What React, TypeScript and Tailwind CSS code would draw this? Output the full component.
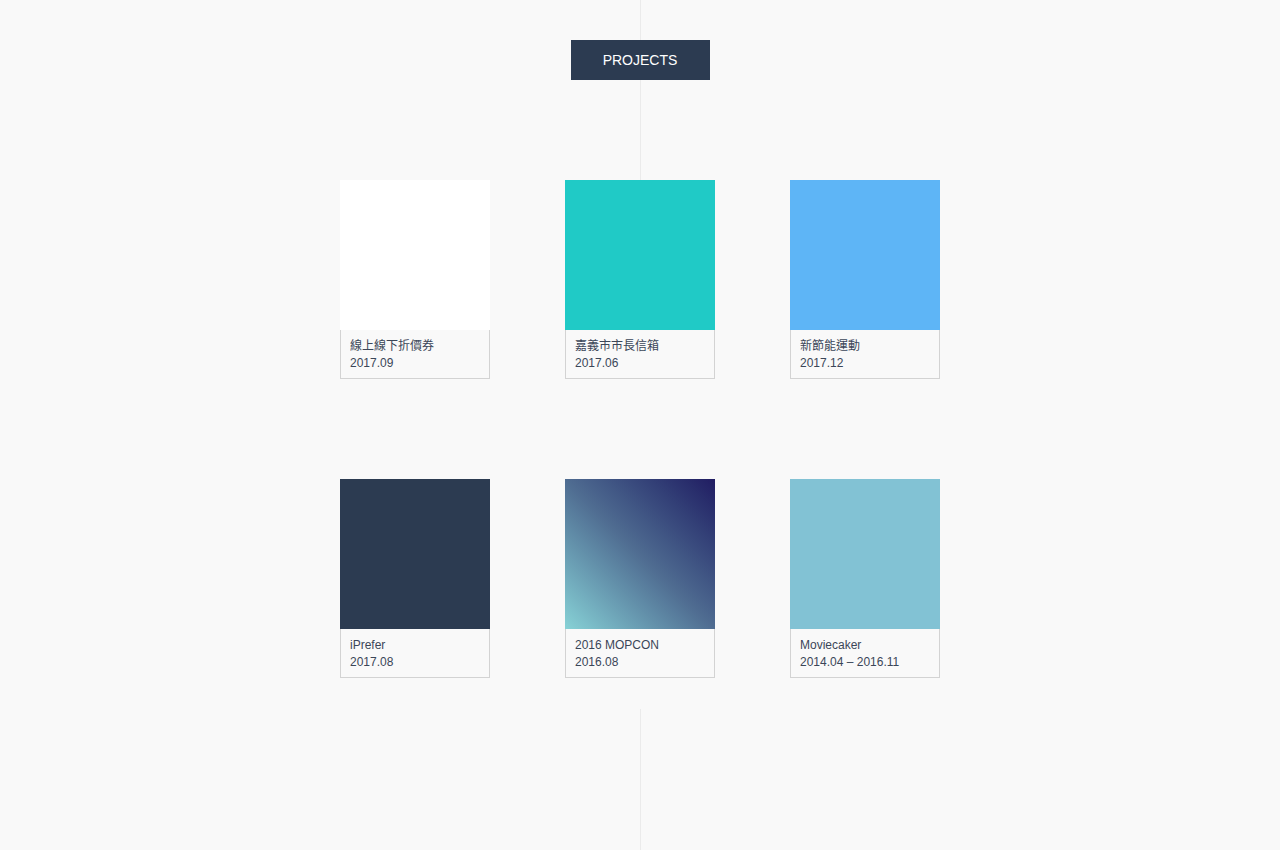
const PROJECTS = [
  { title: "線上線下折價券", date: "2017.09", cover: "bg-white" },
  { title: "嘉義市市長信箱", date: "2017.06", cover: "bg-[#20cac6]" },
  { title: "新節能運動", date: "2017.12", cover: "bg-[#5eb5f6]" },
  { title: "iPrefer", date: "2017.08", cover: "bg-[#2c3b51]" },
  {
    title: "2016 MOPCON",
    date: "2016.08",
    cover: "bg-gradient-to-tr from-[#87d2d6] via-[#4f6c91] to-[#211c62]",
  },
  { title: "Moviecaker", date: "2014.04 – 2016.11", cover: "bg-[#82c2d4]" },
];

function ProjectCard({ title, date, cover }: { title: string; date: string; cover: string }) {
  return (
    <a href="#" className="block w-[150px]">
      <div className={`h-[150px] w-[150px] ${cover}`} />
      <div className="border border-t-0 border-[#d3d3d3] bg-[#f9f9f9] px-[9px] pt-[8px] pb-[6px] text-[12px] leading-[17px] text-[#3b4658]">
        <p className="truncate">{title}</p>
        <p>{date}</p>
      </div>
    </a>
  );
}

export default function App() {
  return (
    <div
      className="relative min-h-[850px] bg-[#f9f9f9]"
      style={{ fontFamily: '"Liberation Sans", "Noto Sans CJK TC", sans-serif' }}
    >
      {/* center guide line, hidden behind the project grid */}
      <div className="absolute inset-y-0 left-[640px] w-px bg-[#ebebeb]" />

      <header className="relative flex justify-center pt-10">
        <div className="flex h-10 w-[139px] items-center justify-center bg-[#2c3b51] text-[14px] text-white">
          PROJECTS
        </div>
      </header>

      <section className="relative mt-[100px] flex justify-center bg-[#f9f9f9] pb-[31px]">
        <div className="grid grid-cols-[repeat(3,150px)] gap-x-[75px] gap-y-[100px]">
          {PROJECTS.map((p) => (
            <ProjectCard key={p.title} {...p} />
          ))}
        </div>
      </section>
    </div>
  );
}
